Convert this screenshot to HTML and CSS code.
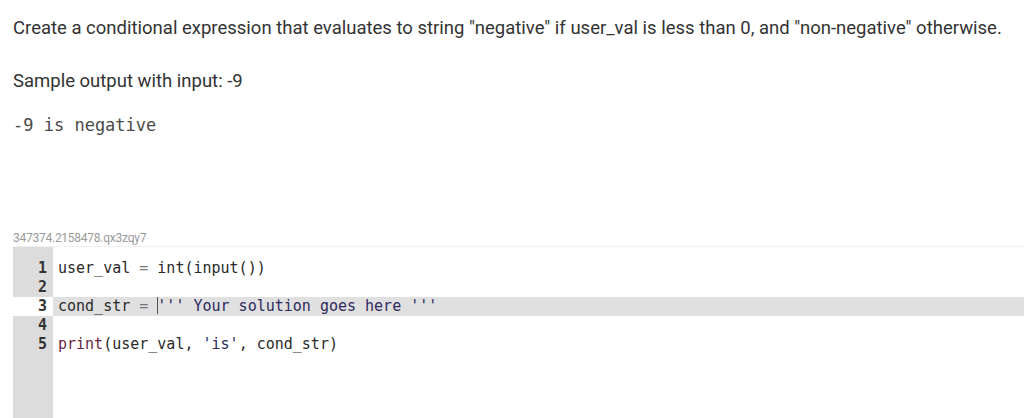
FILE: index.html
```html
<!DOCTYPE html>
<html>
<head>
<meta charset="utf-8">
<link rel="stylesheet" href="styles.css">
</head>
<body>
<div class="page">
  <p class="prompt">Create a conditional expression that evaluates to string "negative" if user_val is less than 0, and "non-negative" otherwise.</p>
  <p class="prompt sample-label">Sample output with input: -9</p>
  <pre class="sample">-9 is negative</pre>
  <div class="caption">347374.2158478.qx3zqy7</div>
  <div class="editor">
    <div class="line"><span class="num">1</span><span class="code"><span class="v">user_val</span> <span class="op">=</span> <span class="v">int(input())</span></span></div>
    <div class="line"><span class="num">2</span><span class="code"></span></div>
    <div class="line active"><span class="num">3</span><span class="code"><span class="v">cond_str</span> <span class="op">=</span> <span class="cursor"></span><span class="str">''' Your solution goes here '''</span></span></div>
    <div class="line"><span class="num">4</span><span class="code"></span></div>
    <div class="line"><span class="num">5</span><span class="code"><span class="kw">print</span><span class="v">(user_val,</span> <span class="str">'is'</span><span class="v">, cond_str)</span></span></div>
    <div class="line filler"><span class="num"></span><span class="code"></span></div>
  </div>
</div>
</body>
</html>
```
FILE: styles.css
```css
html, body {
  margin: 0;
  padding: 0;
  background: #ffffff;
}
.page {
  padding: 15px 0 0 13px;
  height: 403px;
  display: flex;
  flex-direction: column;
  overflow: hidden;
}
.prompt {
  margin: 0;
  font-family: Roboto, "Liberation Sans", sans-serif;
  font-size: 18.5px;
  line-height: 26px;
  color: #333333;
  white-space: nowrap;
}
.sample-label {
  margin-top: 27px;
}
.sample {
  margin: 20px 0 0 0;
  font-family: "DejaVu Sans Mono", monospace;
  font-size: 17px;
  line-height: 22px;
  color: #4a4a4a;
  font-weight: normal;
}
.caption {
  margin-top: 95px;
  font-family: Roboto, "Liberation Sans", sans-serif;
  font-size: 12px;
  line-height: 14px;
  color: #9a9a9a;
  letter-spacing: -0.25px;
}
.editor {
  margin-top: 1px;
  border-top: 1px solid #f0f0f0;
  flex: 1;
  display: flex;
  flex-direction: column;
  padding-top: 12px;
  background: linear-gradient(to right, #dcdcdc 0, #dcdcdc 40px, #ffffff 40px);
  font-family: "DejaVu Sans Mono", monospace;
  font-size: 15px;
}
.line {
  display: flex;
  height: 19px;
  line-height: 19px;
}
.num {
  width: 40px;
  box-sizing: border-box;
  padding-right: 6px;
  text-align: right;
  color: #333333;
  font-weight: bold;
  font-size: 15px;
  flex: none;
}
.code {
  padding-left: 5px;
  white-space: pre;
  flex: 1;
  color: #2a2a2a;
}
.active .num {
  background: #ffffff;
}
.active .code {
  background: #e0e0e0;
}
.filler {
  flex: 1;
}
.op {
  color: #777777;
}
.v {
  color: #2a2a2a;
}
.str {
  color: #2d2a5e;
}
.kw {
  color: #6a1f44;
}
.cursor {
  display: inline-block;
  width: 1px;
  height: 17px;
  background: #555555;
  vertical-align: -3px;
  margin-right: -1px;
}
```
